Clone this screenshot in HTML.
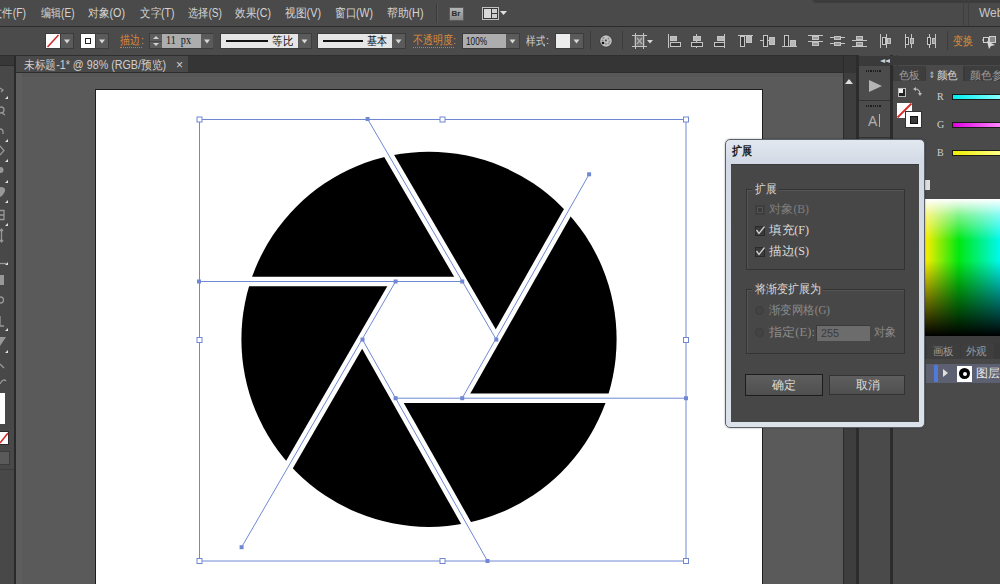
<!DOCTYPE html>
<html><head><meta charset="utf-8">
<style>
*{margin:0;padding:0;box-sizing:border-box}
html,body{width:1000px;height:584px;overflow:hidden;background:#4a4a4a;font-family:"Liberation Sans",sans-serif;position:relative}
.a{position:absolute}
.t{position:absolute;white-space:nowrap;line-height:1;transform-origin:0 0}
svg{position:absolute;left:0;top:0;overflow:visible}
</style></head><body>
<div class="a" style="left:0px;top:0px;width:1000px;height:26px;background:#4a4a4a;"></div>
<div class="a" style="left:0px;top:26px;width:1000px;height:1px;background:#2c2c2c;"></div>
<div class="a" style="left:812px;top:-6px;width:200px;height:9px;background:#3c3c3c;border-radius:6px"></div>
<div class="t" id="t0" style="left:-8px;top:7px;font-size:12px;color:#d4d4d4;font-family:'Liberation Sans',sans-serif;transform:scaleX(0.8645);">文件(F)</div>
<div class="t" id="t1" style="left:40.5px;top:7px;font-size:12px;color:#d4d4d4;font-family:'Liberation Sans',sans-serif;transform:scaleX(0.8375);">编辑(E)</div>
<div class="t" id="t2" style="left:88px;top:7px;font-size:12px;color:#d4d4d4;font-family:'Liberation Sans',sans-serif;transform:scaleX(0.8953);">对象(O)</div>
<div class="t" id="t3" style="left:139.5px;top:7px;font-size:12px;color:#d4d4d4;font-family:'Liberation Sans',sans-serif;transform:scaleX(0.8772);">文字(T)</div>
<div class="t" id="t4" style="left:188px;top:7px;font-size:12px;color:#d4d4d4;font-family:'Liberation Sans',sans-serif;transform:scaleX(0.8500);">选择(S)</div>
<div class="t" id="t5" style="left:235px;top:7px;font-size:12px;color:#d4d4d4;font-family:'Liberation Sans',sans-serif;transform:scaleX(0.8851);">效果(C)</div>
<div class="t" id="t6" style="left:285px;top:7px;font-size:12px;color:#d4d4d4;font-family:'Liberation Sans',sans-serif;transform:scaleX(0.9000);">视图(V)</div>
<div class="t" id="t7" style="left:335px;top:7px;font-size:12px;color:#d4d4d4;font-family:'Liberation Sans',sans-serif;transform:scaleX(0.8770);">窗口(W)</div>
<div class="t" id="t8" style="left:387px;top:7px;font-size:12px;color:#d4d4d4;font-family:'Liberation Sans',sans-serif;transform:scaleX(0.8974);">帮助(H)</div>
<div class="a" style="left:436px;top:4px;width:1px;height:19px;background:#3a3a3a;"></div>
<div class="a" style="left:437px;top:4px;width:1px;height:19px;background:#555;"></div>
<div class="a" style="left:449px;top:7px;width:15px;height:14px;background:linear-gradient(#b4b4b4,#8c8c8c);border:1px solid #5c5c5c"></div>
<div class="t" id="t9" style="left:451.5px;top:10px;font-size:8px;color:#2a2a2a;font-family:'Liberation Sans',sans-serif;font-weight:bold">Br</div>
<div class="a" style="left:482px;top:7px;width:17px;height:13px;border:1px solid #c0c0c0;background:#3a3a3a"></div>
<div class="a" style="left:484px;top:9px;width:7px;height:9px;background:#dadada;"></div>
<div class="a" style="left:492px;top:9px;width:5px;height:4px;background:#cfcfcf;"></div>
<div class="a" style="left:492px;top:14px;width:5px;height:4px;background:#cfcfcf;"></div>
<svg width="1000" height="584"><polygon points="500,11 507,11 503.5,15" fill="#e0e0e0"/></svg>
<div class="a" style="left:963px;top:0px;width:1px;height:26px;background:#3f3f3f;"></div>
<div class="a" style="left:968px;top:0px;width:1px;height:26px;background:#3f3f3f;"></div>
<div class="t" id="t10" style="left:979px;top:7px;font-size:12px;color:#c8c8c8;font-family:'Liberation Sans',sans-serif;">Web</div>
<div class="a" style="left:0px;top:27px;width:1000px;height:28px;background:#4b4b4b;"></div>
<div class="a" style="left:0px;top:55px;width:1000px;height:1px;background:#2e2e2e;"></div>
<div class="a" style="left:45px;top:33px;width:29px;height:16px;background:#3c3c3c;"></div>
<div class="a" style="left:46px;top:34px;width:14px;height:14px;background:#ffffff;"></div>
<svg width="1000" height="584"><line x1="47.5" y1="47" x2="58.5" y2="35" stroke="#d42a2a" stroke-width="1.6"/></svg>
<div class="a" style="left:61px;top:34px;width:12px;height:14px;background:#5a5a5a;"></div>
<div class="a" style="left:80px;top:33px;width:29px;height:16px;background:#3c3c3c;"></div>
<div class="a" style="left:81px;top:34px;width:14px;height:14px;background:#ffffff;"></div>
<div class="a" style="left:85px;top:38px;width:6px;height:6px;border:1px solid #222"></div>
<div class="a" style="left:96px;top:34px;width:12px;height:14px;background:#5a5a5a;"></div>
<svg width="1000" height="584"><polygon points="64.0,39.5 70.0,39.5 67,43.5" fill="#d6d6d6"/></svg>
<svg width="1000" height="584"><polygon points="99.0,39.5 105.0,39.5 102,43.5" fill="#d6d6d6"/></svg>
<div class="t" id="t11" style="left:120px;top:35px;font-size:11.5px;color:#dc8a3a;font-family:'Liberation Sans',sans-serif;transform:scaleX(0.8333);">描边</div>
<div class="t" id="t12" style="left:141px;top:35px;font-size:11px;color:#dc8a3a;font-family:'Liberation Sans',sans-serif;">:</div>
<div class="a" style="left:120px;top:47px;width:22px;height:0;border-top:1px dotted #c87a30"></div>
<div class="a" style="left:149px;top:33px;width:64px;height:16px;background:#3c3c3c;"></div>
<div class="a" style="left:150px;top:34px;width:12px;height:14px;background:#5d5d5d;"></div>
<div class="a" style="left:150px;top:40.5px;width:12px;height:1px;background:#444;"></div>
<svg width="1000" height="584"><polygon points="153,39 159,39 156,36" fill="#cfcfcf"/><polygon points="153,43 159,43 156,46" fill="#cfcfcf"/></svg>
<div class="a" style="left:162px;top:34px;width:39px;height:14px;background:#adadad;"></div>
<div class="t" id="t13" style="left:166px;top:35px;font-size:11.5px;color:#151515;font-family:'Liberation Serif',serif;transform:scaleX(0.8825);">11&nbsp;&nbsp;px</div>
<div class="a" style="left:201px;top:34px;width:12px;height:14px;background:#5a5a5a;"></div>
<svg width="1000" height="584"><polygon points="204.0,39.5 210.0,39.5 207,43.5" fill="#d6d6d6"/></svg>
<div class="a" style="left:220px;top:33px;width:92px;height:16px;background:#3c3c3c;"></div>
<div class="a" style="left:221px;top:34px;width:77px;height:14px;background:#e6e6e6;"></div>
<div class="a" style="left:226px;top:39.5px;width:42px;height:2px;background:#111;"></div>
<div class="t" id="t14" style="left:272px;top:35px;font-size:12px;color:#111;font-family:'Liberation Sans',sans-serif;transform:scaleX(0.8750);">等比</div>
<div class="a" style="left:298px;top:34px;width:13px;height:14px;background:#5a5a5a;"></div>
<svg width="1000" height="584"><polygon points="301.5,39.5 307.5,39.5 304.5,43.5" fill="#d6d6d6"/></svg>
<div class="a" style="left:317px;top:33px;width:89px;height:16px;background:#3c3c3c;"></div>
<div class="a" style="left:318px;top:34px;width:74px;height:14px;background:#e6e6e6;"></div>
<div class="a" style="left:323px;top:39.5px;width:40px;height:2px;background:#111;"></div>
<div class="t" id="t15" style="left:367px;top:35px;font-size:12px;color:#111;font-family:'Liberation Sans',sans-serif;transform:scaleX(0.8333);">基本</div>
<div class="a" style="left:392px;top:34px;width:13px;height:14px;background:#5a5a5a;"></div>
<svg width="1000" height="584"><polygon points="395.5,39.5 401.5,39.5 398.5,43.5" fill="#d6d6d6"/></svg>
<div class="t" id="t16" style="left:413px;top:35px;font-size:11.5px;color:#dc8a3a;font-family:'Liberation Sans',sans-serif;transform:scaleX(0.8333);">不透明度</div>
<div class="t" id="t17" style="left:453px;top:35px;font-size:11px;color:#dc8a3a;font-family:'Liberation Sans',sans-serif;">:</div>
<div class="a" style="left:413px;top:47px;width:41px;height:0;border-top:1px dotted #c87a30"></div>
<div class="a" style="left:462px;top:33px;width:58px;height:16px;background:#3c3c3c;"></div>
<div class="a" style="left:463px;top:34px;width:43px;height:14px;background:#adadad;"></div>
<div class="t" id="t18" style="left:466px;top:36px;font-size:10.5px;color:#151515;font-family:'Liberation Sans',sans-serif;transform:scaleX(0.7818);">100%</div>
<div class="a" style="left:506px;top:34px;width:13px;height:14px;background:#5a5a5a;"></div>
<svg width="1000" height="584"><polygon points="509.5,39.5 515.5,39.5 512.5,43.5" fill="#d6d6d6"/></svg>
<div class="t" id="t19" style="left:526px;top:35px;font-size:12px;color:#d0d0d0;font-family:'Liberation Sans',sans-serif;transform:scaleX(0.7917);">样式</div>
<div class="t" id="t20" style="left:546px;top:35px;font-size:11px;color:#d0d0d0;font-family:'Liberation Sans',sans-serif;">:</div>
<div class="a" style="left:555px;top:33px;width:29px;height:16px;background:#3c3c3c;"></div>
<div class="a" style="left:556px;top:34px;width:14px;height:14px;background:#ececec;"></div>
<div class="a" style="left:570px;top:34px;width:13px;height:14px;background:#5a5a5a;"></div>
<svg width="1000" height="584"><polygon points="573.5,39.5 579.5,39.5 576.5,43.5" fill="#d6d6d6"/></svg>
<div class="a" style="left:590px;top:31px;width:1px;height:19px;background:#3c3c3c;"></div>
<svg width="1000" height="584"><circle cx="606" cy="41" r="6.5" fill="#3c3c3c"/><circle cx="606" cy="41" r="5.8" fill="#c2c2c2"/><g fill="#8a8a8a"><circle cx="603.5" cy="38" r="1"/><circle cx="608.5" cy="38.5" r="1"/><circle cx="606" cy="40.5" r="1.1"/><circle cx="602.5" cy="40.5" r="1"/><circle cx="609.5" cy="41.5" r="1"/><circle cx="606" cy="44" r="1"/><circle cx="608.5" cy="43.5" r="0.9"/></g><circle cx="603" cy="43" r="1.3" fill="#111"/><circle cx="605.8" cy="40.4" r="0.9" fill="#444"/></svg>
<div class="a" style="left:622px;top:31px;width:1px;height:19px;background:#3c3c3c;"></div>
<svg width="1000" height="584"><rect x="634" y="35" width="11" height="12" fill="#6a6a6a"/><line x1="632" y1="35.5" x2="647" y2="35.5" stroke="#c4c4c4"/><line x1="632" y1="46.5" x2="647" y2="46.5" stroke="#c4c4c4"/><line x1="635.5" y1="33" x2="635.5" y2="49" stroke="#c4c4c4"/><line x1="643.5" y1="33" x2="643.5" y2="49" stroke="#c4c4c4"/><path d="M637,38 L642,44 M642,38 L637,44" stroke="#aaa" stroke-width="1.5"/><polygon points="647,40 653,40 650,43.5" fill="#d6d6d6"/></svg>
<svg width="1000" height="584"><line x1="668.5" y1="34" x2="668.5" y2="48" stroke="#c4c4c4"/><rect x="670.5" y="36.5" width="6" height="4" fill="#b8b8b8" stroke="#c4c4c4"/><rect x="670.5" y="42.5" width="10" height="4" fill="#3a3a3a" stroke="#c4c4c4"/></svg>
<svg width="1000" height="584"><line x1="696.5" y1="34" x2="696.5" y2="48" stroke="#c4c4c4"/><rect x="693.5" y="36.5" width="7" height="4" fill="#b8b8b8" stroke="#c4c4c4"/><rect x="691.5" y="42.5" width="11" height="4" fill="#3a3a3a" stroke="#c4c4c4"/></svg>
<svg width="1000" height="584"><line x1="724.5" y1="34" x2="724.5" y2="48" stroke="#c4c4c4"/><rect x="717.5" y="36.5" width="7" height="4" fill="#b8b8b8" stroke="#c4c4c4"/><rect x="714.5" y="42.5" width="10" height="4" fill="#3a3a3a" stroke="#c4c4c4"/></svg>
<svg width="1000" height="584"><line x1="738" y1="35.5" x2="753" y2="35.5" stroke="#c4c4c4"/><rect x="740.5" y="36.5" width="4" height="10" fill="#3a3a3a" stroke="#c4c4c4"/><rect x="746.5" y="36.5" width="5" height="6" fill="#b8b8b8" stroke="#c4c4c4"/></svg>
<svg width="1000" height="584"><line x1="760" y1="40.5" x2="775" y2="40.5" stroke="#c4c4c4"/><rect x="763.5" y="35.5" width="4" height="11" fill="#3a3a3a" stroke="#c4c4c4"/><rect x="769.5" y="37.5" width="5" height="7" fill="#b8b8b8" stroke="#c4c4c4"/></svg>
<svg width="1000" height="584"><line x1="782" y1="46.5" x2="797" y2="46.5" stroke="#c4c4c4"/><rect x="784.5" y="35.5" width="4" height="11" fill="#3a3a3a" stroke="#c4c4c4"/><rect x="790.5" y="40.5" width="5" height="6" fill="#b8b8b8" stroke="#c4c4c4"/></svg>
<svg width="1000" height="584"><line x1="808" y1="35.5" x2="823" y2="35.5" stroke="#c4c4c4"/><line x1="808" y1="41.5" x2="823" y2="41.5" stroke="#c4c4c4"/><rect x="812.5" y="36.5" width="6" height="3" fill="#9a9a9a" stroke="#c4c4c4"/><rect x="812.5" y="42.5" width="6" height="3" fill="#9a9a9a" stroke="#c4c4c4"/></svg>
<svg width="1000" height="584"><line x1="830" y1="37.5" x2="845" y2="37.5" stroke="#c4c4c4"/><line x1="830" y1="43.5" x2="845" y2="43.5" stroke="#c4c4c4"/><rect x="834.5" y="36.5" width="6" height="3" fill="#9a9a9a" stroke="#c4c4c4"/><rect x="834.5" y="42.5" width="6" height="3" fill="#9a9a9a" stroke="#c4c4c4"/></svg>
<svg width="1000" height="584"><line x1="852" y1="40.5" x2="867" y2="40.5" stroke="#c4c4c4"/><line x1="852" y1="46.5" x2="867" y2="46.5" stroke="#c4c4c4"/><rect x="856.5" y="36.5" width="6" height="3" fill="#9a9a9a" stroke="#c4c4c4"/><rect x="856.5" y="42.5" width="6" height="3" fill="#9a9a9a" stroke="#c4c4c4"/></svg>
<svg width="1000" height="584"><line x1="880.5" y1="34" x2="880.5" y2="48" stroke="#c4c4c4"/><line x1="886.5" y1="34" x2="886.5" y2="48" stroke="#c4c4c4"/><rect x="882.5" y="37.5" width="3" height="7" fill="#3a3a3a" stroke="#c4c4c4"/><rect x="887.5" y="38.5" width="3" height="5" fill="#9a9a9a" stroke="#c4c4c4"/></svg>
<svg width="1000" height="584"><line x1="905.5" y1="34" x2="905.5" y2="48" stroke="#c4c4c4"/><line x1="911.5" y1="34" x2="911.5" y2="48" stroke="#c4c4c4"/><rect x="905.5" y="37.5" width="3" height="7" fill="#3a3a3a" stroke="#c4c4c4"/><rect x="910.5" y="38.5" width="3" height="5" fill="#9a9a9a" stroke="#c4c4c4"/></svg>
<svg width="1000" height="584"><line x1="929.5" y1="34" x2="929.5" y2="48" stroke="#c4c4c4"/><line x1="935.5" y1="34" x2="935.5" y2="48" stroke="#c4c4c4"/><rect x="927.5" y="37.5" width="3" height="7" fill="#3a3a3a" stroke="#c4c4c4"/><rect x="932.5" y="38.5" width="3" height="5" fill="#9a9a9a" stroke="#c4c4c4"/></svg>
<div class="a" style="left:947px;top:31px;width:1px;height:19px;background:#3c3c3c;"></div>
<div class="t" id="t21" style="left:953px;top:35px;font-size:12px;color:#dc8a3a;font-family:'Liberation Sans',sans-serif;transform:scaleX(0.8333);">变换</div>
<svg width="1000" height="584"><rect x="983.5" y="37.5" width="5" height="5" fill="none" stroke="#cfcfcf"/><rect x="989.5" y="36.5" width="6" height="6" fill="#888" stroke="#cfcfcf"/><polygon points="987,41 995,45 991,46 989,49" fill="#d8d8d8"/><line x1="982" y1="40" x2="984" y2="40" stroke="#cfcfcf"/></svg>
<div class="a" style="left:0px;top:56px;width:856px;height:17px;background:#353535;"></div>
<div class="a" style="left:16px;top:56px;width:172px;height:16px;background:#494949;"></div>
<div class="a" style="left:16px;top:72px;width:827px;height:1px;background:#2c2c2c;"></div>
<div class="t" id="t22" style="left:24px;top:59px;font-size:12px;color:#cfcfcf;font-family:'Liberation Sans',sans-serif;transform:scaleX(0.8938);">未标题-1* @ 98% (RGB/预览)</div>
<div class="t" id="t23" style="left:176px;top:59px;font-size:12px;color:#cfcfcf;font-family:'Liberation Sans',sans-serif;transform:scaleX(0.9978);">×</div>
<div class="a" style="left:0px;top:56px;width:14px;height:528px;background:#484848;"></div>
<div class="a" style="left:0px;top:56px;width:14px;height:9px;background:#383838;"></div>
<div class="a" style="left:14px;top:56px;width:2px;height:528px;background:#2a2a2a;"></div>
<div class="a" style="left:16px;top:73px;width:827px;height:511px;background:#5a5a5a;"></div>
<div class="a" style="left:16px;top:73px;width:827px;height:4px;background:#575757;"></div>
<div class="a" style="left:16px;top:73px;width:6px;height:511px;background:#5d5d5d;"></div>
<div class="a" style="left:95px;top:89px;width:668px;height:500px;background:#ffffff;border:1px solid #1e1e1e"></div>
<svg width="1000" height="584"><circle cx="429" cy="339.3" r="187.6" fill="#000"/>
<polygon points="395.6,281.5 462.2,281.5 496.3,339.6 462.2,398.2 395.6,398.2 362.5,339.6" fill="#fff"/>
<line x1="199.0" y1="281.5" x2="462.2" y2="281.5" stroke="#fff" stroke-width="9.5"/>
<line x1="367.6" y1="119.0" x2="496.3" y2="339.6" stroke="#fff" stroke-width="9.5"/>
<line x1="589.1" y1="174.3" x2="462.2" y2="398.2" stroke="#fff" stroke-width="9.5"/>
<line x1="395.6" y1="398.2" x2="686.0" y2="398.2" stroke="#fff" stroke-width="9.5"/>
<line x1="487.5" y1="561.0" x2="362.5" y2="339.6" stroke="#fff" stroke-width="9.5"/>
<line x1="241.6" y1="547.2" x2="395.6" y2="281.5" stroke="#fff" stroke-width="9.5"/>
<rect x="199.5" y="119.5" width="486.5" height="441.5" fill="none" stroke="#7088d4" stroke-width="1"/>
<line x1="199.0" y1="281.5" x2="462.2" y2="281.5" stroke="#7088d4" stroke-width="1"/>
<line x1="367.6" y1="119.0" x2="496.3" y2="339.6" stroke="#7088d4" stroke-width="1"/>
<line x1="589.1" y1="174.3" x2="462.2" y2="398.2" stroke="#7088d4" stroke-width="1"/>
<line x1="395.6" y1="398.2" x2="686.0" y2="398.2" stroke="#7088d4" stroke-width="1"/>
<line x1="487.5" y1="561.0" x2="362.5" y2="339.6" stroke="#7088d4" stroke-width="1"/>
<line x1="241.6" y1="547.2" x2="395.6" y2="281.5" stroke="#7088d4" stroke-width="1"/>
<rect x="197.0" y="279.5" width="4" height="4" fill="#7088d4"/>
<rect x="460.2" y="279.5" width="4" height="4" fill="#7088d4"/>
<rect x="365.6" y="117.0" width="4" height="4" fill="#7088d4"/>
<rect x="494.3" y="337.6" width="4" height="4" fill="#7088d4"/>
<rect x="587.1" y="172.3" width="4" height="4" fill="#7088d4"/>
<rect x="460.2" y="396.2" width="4" height="4" fill="#7088d4"/>
<rect x="393.6" y="396.2" width="4" height="4" fill="#7088d4"/>
<rect x="684.0" y="396.2" width="4" height="4" fill="#7088d4"/>
<rect x="485.5" y="559.0" width="4" height="4" fill="#7088d4"/>
<rect x="360.5" y="337.6" width="4" height="4" fill="#7088d4"/>
<rect x="239.6" y="545.2" width="4" height="4" fill="#7088d4"/>
<rect x="393.6" y="279.5" width="4" height="4" fill="#7088d4"/>
<rect x="197.0" y="117.0" width="5" height="5" fill="#fff" stroke="#7088d4" stroke-width="1"/>
<rect x="440.0" y="117.0" width="5" height="5" fill="#fff" stroke="#7088d4" stroke-width="1"/>
<rect x="683.5" y="117.0" width="5" height="5" fill="#fff" stroke="#7088d4" stroke-width="1"/>
<rect x="197.0" y="337.5" width="5" height="5" fill="#fff" stroke="#7088d4" stroke-width="1"/>
<rect x="683.5" y="337.5" width="5" height="5" fill="#fff" stroke="#7088d4" stroke-width="1"/>
<rect x="197.0" y="558.5" width="5" height="5" fill="#fff" stroke="#7088d4" stroke-width="1"/>
<rect x="440.0" y="558.5" width="5" height="5" fill="#fff" stroke="#7088d4" stroke-width="1"/>
<rect x="683.5" y="558.5" width="5" height="5" fill="#fff" stroke="#7088d4" stroke-width="1"/></svg>
<div class="a" style="left:843px;top:55px;width:1px;height:529px;background:#2b2b2b;"></div>
<div class="a" style="left:844px;top:73px;width:12px;height:511px;background:#3e3e3e;"></div>
<svg width="1000" height="584"><polygon points="845,84 853,84 849,79" fill="#dddddd"/></svg>
<div class="a" style="left:856px;top:55px;width:3px;height:529px;background:#2c2c2c;"></div>
<div class="a" style="left:859px;top:55px;width:31px;height:529px;background:#4a4a4a;"></div>
<div class="a" style="left:859px;top:56px;width:31px;height:10px;background:#3a3a3a;"></div>
<div class="a" style="left:890px;top:55px;width:3px;height:529px;background:#2c2c2c;"></div>
<div class="a" style="left:893px;top:55px;width:4px;height:529px;background:#474747;"></div>
<div class="a" style="left:897px;top:55px;width:1px;height:529px;background:#333;"></div>
<div class="a" style="left:898px;top:55px;width:102px;height:529px;background:#4a4a4a;"></div>
<div class="a" style="left:859px;top:56px;width:141px;height:9px;background:#3a3a3a;"></div>
<div class="t" id="t24" style="left:880px;top:57px;font-size:8px;color:#cfcfcf;font-family:'Liberation Sans',sans-serif;transform:scaleX(1.2500);">◂◂</div>
<div class="a" style="left:859px;top:66px;width:31px;height:34px;background:#4c4c4c;"></div>
<div class="a" style="left:859px;top:100px;width:31px;height:1px;background:#333;"></div>
<div class="a" style="left:859px;top:101px;width:31px;height:36px;background:#4c4c4c;"></div>
<div class="a" style="left:859px;top:137px;width:31px;height:1px;background:#333;"></div>
<div class="a" style="left:866.0px;top:70px;width:1px;height:2px;background:#1e1e1e;"></div>
<div class="a" style="left:867.8px;top:70px;width:1px;height:2px;background:#1e1e1e;"></div>
<div class="a" style="left:869.6px;top:70px;width:1px;height:2px;background:#1e1e1e;"></div>
<div class="a" style="left:871.4px;top:70px;width:1px;height:2px;background:#1e1e1e;"></div>
<div class="a" style="left:873.2px;top:70px;width:1px;height:2px;background:#1e1e1e;"></div>
<div class="a" style="left:875.0px;top:70px;width:1px;height:2px;background:#1e1e1e;"></div>
<div class="a" style="left:876.8px;top:70px;width:1px;height:2px;background:#1e1e1e;"></div>
<div class="a" style="left:878.6px;top:70px;width:1px;height:2px;background:#1e1e1e;"></div>
<div class="a" style="left:880.4px;top:70px;width:1px;height:2px;background:#1e1e1e;"></div>
<div class="a" style="left:866.0px;top:105px;width:1px;height:2px;background:#1e1e1e;"></div>
<div class="a" style="left:867.8px;top:105px;width:1px;height:2px;background:#1e1e1e;"></div>
<div class="a" style="left:869.6px;top:105px;width:1px;height:2px;background:#1e1e1e;"></div>
<div class="a" style="left:871.4px;top:105px;width:1px;height:2px;background:#1e1e1e;"></div>
<div class="a" style="left:873.2px;top:105px;width:1px;height:2px;background:#1e1e1e;"></div>
<div class="a" style="left:875.0px;top:105px;width:1px;height:2px;background:#1e1e1e;"></div>
<div class="a" style="left:876.8px;top:105px;width:1px;height:2px;background:#1e1e1e;"></div>
<div class="a" style="left:878.6px;top:105px;width:1px;height:2px;background:#1e1e1e;"></div>
<div class="a" style="left:880.4px;top:105px;width:1px;height:2px;background:#1e1e1e;"></div>
<svg width="1000" height="584"><polygon points="869,80 869,92 882,86" fill="#b4b4b4"/></svg>
<div class="t" id="t25" style="left:868px;top:114px;font-size:14px;color:#b0b0b0;font-family:'Liberation Sans',sans-serif;">A</div>
<div class="a" style="left:879px;top:114px;width:1px;height:13px;background:#b0b0b0;"></div>
<div class="a" style="left:893px;top:66px;width:107px;height:15px;background:#3a3a3a;"></div>
<div class="a" style="left:894px;top:66px;width:31px;height:15px;background:#3e3e3e;"></div>
<div class="a" style="left:926px;top:66px;width:37px;height:15px;background:#4a4a4a;"></div>
<div class="a" style="left:965px;top:66px;width:35px;height:15px;background:#3e3e3e;"></div>
<div class="t" id="t26" style="left:899px;top:69.5px;font-size:11px;color:#9a9a9a;font-family:'Liberation Sans',sans-serif;transform:scaleX(0.9545);">色板</div>
<div class="t" id="t27" style="left:929px;top:70.5px;font-size:9px;color:#cfcfcf;font-family:'Liberation Sans',sans-serif;transform:scaleX(0.7500);">⇕</div>
<div class="t" id="t28" style="left:937px;top:69.5px;font-size:11px;color:#d8d8d8;font-family:'Liberation Sans',sans-serif;transform:scaleX(0.9545);">颜色</div>
<div class="t" id="t29" style="left:970px;top:69.5px;font-size:11px;color:#9a9a9a;font-family:'Liberation Sans',sans-serif;">颜色参</div>
<div class="a" style="left:893px;top:81px;width:107px;height:255px;background:#4a4a4a;"></div>
<div class="a" style="left:898px;top:88px;width:8px;height:9px;border:1px solid #bbb;background:#222"></div>
<div class="a" style="left:899px;top:89px;width:4px;height:4px;background:#eee;"></div>
<svg width="1000" height="584"><path d="M915,89 q5,0 5,5" fill="none" stroke="#bbb" stroke-width="1.2"/><polygon points="913,89 916,87 916,91" fill="#bbb"/><polygon points="920,96 918,93 922,93" fill="#bbb"/></svg>
<div class="a" style="left:897px;top:103px;width:15px;height:15px;background:#ffffff;"></div>
<svg width="1000" height="584"><line x1="897.5" y1="117.5" x2="911.5" y2="103.5" stroke="#d42a2a" stroke-width="1.8"/></svg>
<div class="a" style="left:905px;top:111px;width:17px;height:17px;background:#fff;border:1px solid #333"></div>
<div class="a" style="left:910px;top:116px;width:8px;height:8px;border:1px solid #111;background:#3a3a3a"></div>
<div class="t" id="t30" style="left:937px;top:92px;font-size:10px;color:#d0d0d0;font-family:'Liberation Serif',serif;">R</div>
<div class="t" id="t31" style="left:937px;top:120px;font-size:10px;color:#d0d0d0;font-family:'Liberation Serif',serif;">G</div>
<div class="t" id="t32" style="left:937px;top:148px;font-size:10px;color:#d0d0d0;font-family:'Liberation Serif',serif;">B</div>
<div class="a" style="left:952px;top:94px;width:48px;height:6px;background:#1a1a1a;"></div>
<div class="a" style="left:953px;top:95px;width:47px;height:4px;background:linear-gradient(90deg,#00eeee,#88ffff)"></div>
<div class="a" style="left:952px;top:122px;width:48px;height:6px;background:#1a1a1a;"></div>
<div class="a" style="left:953px;top:123px;width:47px;height:4px;background:linear-gradient(90deg,#e000e0,#ff88ff)"></div>
<div class="a" style="left:952px;top:150px;width:48px;height:6px;background:#1a1a1a;"></div>
<div class="a" style="left:953px;top:151px;width:47px;height:4px;background:linear-gradient(90deg,#eeee00,#ffff88)"></div>
<div class="a" style="left:924px;top:180px;width:6px;height:10px;background:#dedede;"></div>
<div class="a" style="left:925px;top:199px;width:75px;height:137px;background:linear-gradient(to bottom,rgba(255,255,255,1) 0%,rgba(255,255,255,.5) 12%,rgba(255,255,255,0) 30%,rgba(0,0,0,0) 45%,rgba(0,0,0,.5) 72%,rgba(0,0,0,1) 100%),linear-gradient(90deg,#ffee00 0%,#00e810 45%,#00f8f0 100%)"></div>
<div class="a" style="left:893px;top:336px;width:107px;height:7px;background:#3d3d3d;"></div>
<div class="a" style="left:893px;top:343px;width:107px;height:16px;background:#3a3a3a;"></div>
<div class="a" style="left:927px;top:343px;width:33px;height:16px;background:#3e3e3e;"></div>
<div class="a" style="left:961px;top:343px;width:33px;height:16px;background:#3e3e3e;"></div>
<div class="t" id="t33" style="left:933px;top:346px;font-size:11px;color:#9a9a9a;font-family:'Liberation Sans',sans-serif;transform:scaleX(0.9545);">画板</div>
<div class="t" id="t34" style="left:966px;top:346px;font-size:11px;color:#9a9a9a;font-family:'Liberation Sans',sans-serif;transform:scaleX(0.9545);">外观</div>
<div class="a" style="left:893px;top:359px;width:107px;height:5px;background:#484848;"></div>
<div class="a" style="left:926px;top:364px;width:74px;height:19px;background:#5c6070;"></div>
<div class="a" style="left:934px;top:365px;width:4px;height:17px;background:#4f7ad8;"></div>
<svg width="1000" height="584"><polygon points="943,369 943,377 948,373" fill="#e0e0e0"/></svg>
<div class="a" style="left:957px;top:366px;width:15px;height:16px;background:#ffffff;"></div>
<div class="a" style="left:959px;top:368px;width:11px;height:11px;border-radius:50%;background:#000"></div>
<div class="a" style="left:962.5px;top:371.5px;width:4px;height:4px;border-radius:50%;background:#fff"></div>
<div class="t" id="t35" style="left:976px;top:367px;font-size:12px;color:#e8e8e8;font-family:'Liberation Sans',sans-serif;transform:scaleX(1.0000);">图层</div>
<div class="a" style="left:893px;top:383px;width:107px;height:201px;background:#4a4a4a;"></div>
<div class="a" style="left:0px;top:65px;width:14px;height:1px;background:#2c2c2c;"></div>
<svg width="1000" height="584"><polygon points="5,99 8,99 8,96" fill="#e0e0e0"/></svg>
<svg width="1000" height="584"><polygon points="5,142 8,142 8,139" fill="#e0e0e0"/></svg>
<svg width="1000" height="584"><polygon points="5,162 8,162 8,159" fill="#e0e0e0"/></svg>
<svg width="1000" height="584"><polygon points="5,183 8,183 8,180" fill="#e0e0e0"/></svg>
<svg width="1000" height="584"><polygon points="5,203 8,203 8,200" fill="#e0e0e0"/></svg>
<svg width="1000" height="584"><polygon points="5,226 8,226 8,223" fill="#e0e0e0"/></svg>
<svg width="1000" height="584"><polygon points="5,265 8,265 8,262" fill="#e0e0e0"/></svg>
<svg width="1000" height="584"><polygon points="5,331 8,331 8,328" fill="#e0e0e0"/></svg>
<svg width="1000" height="584"><polygon points="5,353 8,353 8,350" fill="#e0e0e0"/></svg>
<svg width="1000" height="584" style="opacity:.85"><g fill="none" stroke="#a6a6a6" stroke-width="1.3">
<path d="M0,88 L3,90 L1,92"/>
<circle cx="1" cy="110" r="3"/><path d="M2,113 L5,115"/>
<path d="M0,129 q3,0 3,3 v2"/>
<path d="M0,146 L4,150.5 L0,155"/>
<path d="M0,210.5 h4 v9 h-4 M0,215 h4"/>
<path d="M1.5,229 v13 M0,231 l1.5,-2 l1.5,2 M0,240 l1.5,2 l1.5,-2"/>
<path d="M0,263.5 h6"/>
<circle cx="0.5" cy="300" r="3"/>
<path d="M0,316 v10 h4"/>
<path d="M0,364 l4,4"/>
<path d="M0,384 q3,-6 6,-3"/>
</g><g fill="#a6a6a6">
<circle cx="0.5" cy="170" r="3"/>
<path d="M0,187 q6,0 5,4 q-2,5 -5,6 z"/>
<rect x="0" y="275" width="4" height="10"/>
<path d="M0,337 h6 l-6,9 z"/>
</g></svg>
<div class="a" style="left:0px;top:393px;width:5px;height:31px;background:#ffffff;"></div>
<div class="a" style="left:0px;top:431px;width:9px;height:14px;background:#2a2a2a;"></div>
<div class="a" style="left:0px;top:432px;width:8px;height:12px;background:#ffffff;"></div>
<svg width="1000" height="584"><line x1="0" y1="443" x2="8" y2="433" stroke="#d42a2a" stroke-width="1.6"/></svg>
<div class="a" style="left:0px;top:451px;width:10px;height:14px;background:#3c3c3c;"></div>
<div class="a" style="left:0px;top:452px;width:9px;height:12px;background:#5a5a5a;"></div>
<div class="a" style="left:0px;top:469px;width:14px;height:1px;background:#3c3c3c;"></div>
<div class="a" style="left:725px;top:139px;width:200px;height:289px;border-radius:5px;background:linear-gradient(180deg,#e2e8f0 0%,#d3dae5 8%,#dce2ea 100%);border:1px solid #5b616a;box-shadow:0 0 2px rgba(0,0,0,.4)"></div>
<div class="t" id="t36" style="left:732px;top:146px;font-size:11.5px;color:#1a1a1a;font-family:'Liberation Sans',sans-serif;transform:scaleX(0.8333);font-weight:bold">扩展</div>
<div class="a" style="left:731px;top:164px;width:188px;height:258px;background:#474747;"></div>
<div class="a" style="left:731px;top:164px;width:188px;height:1px;background:#3a3a3a;"></div>
<div class="a" style="left:746px;top:189px;width:159px;height:81px;border:1px solid #333;box-shadow:inset 1px 1px 0 #555"></div>
<div class="a" style="left:752px;top:183px;width:26px;height:12px;background:#474747;"></div>
<div class="t" id="t37" style="left:754.5px;top:183px;font-size:12px;color:#d8d8d8;font-family:'Liberation Sans',sans-serif;transform:scaleX(0.8958);">扩展</div>
<div class="a" style="left:755px;top:204.5px;width:10px;height:10px;background:#3a3a3a;border:1px solid #404040"></div>
<div class="a" style="left:757px;top:206.5px;width:6px;height:6px;border:1px solid #555"></div>
<div class="a" style="left:755px;top:225.5px;width:10px;height:10px;background:#3a3a3a;border:1px solid #2a2a2a"></div>
<svg width="1000" height="584"><polyline points="756.5,230.0 759,233.5 764.5,226.5" fill="none" stroke="#d0d0d0" stroke-width="1.3"/></svg>
<div class="a" style="left:755px;top:246.5px;width:10px;height:10px;background:#3a3a3a;border:1px solid #2a2a2a"></div>
<svg width="1000" height="584"><polyline points="756.5,251.0 759,254.5 764.5,247.5" fill="none" stroke="#d0d0d0" stroke-width="1.3"/></svg>
<div class="t" id="t38" style="left:768.5px;top:204px;font-size:11.5px;color:#7e7e7e;font-family:'Liberation Serif',serif;transform:scaleX(1.0167);">对象(B)</div>
<div class="t" id="t39" style="left:768.5px;top:225px;font-size:11.5px;color:#dadada;font-family:'Liberation Serif',serif;transform:scaleX(1.0509);">填充(F)</div>
<div class="t" id="t40" style="left:768.5px;top:246px;font-size:11.5px;color:#dadada;font-family:'Liberation Serif',serif;transform:scaleX(1.0509);">描边(S)</div>
<div class="a" style="left:746px;top:289px;width:159px;height:65px;border:1px solid #333;box-shadow:inset 1px 1px 0 #555"></div>
<div class="a" style="left:752px;top:283px;width:71px;height:12px;background:#474747;"></div>
<div class="t" id="t41" style="left:754.5px;top:283px;font-size:12px;color:#d8d8d8;font-family:'Liberation Sans',sans-serif;transform:scaleX(0.9236);">将渐变扩展为</div>
<div class="a" style="left:754.5px;top:306px;width:9px;height:9px;border-radius:50%;background:#434343;border:1px solid #3c3c3c"></div>
<div class="a" style="left:754.5px;top:328px;width:9px;height:9px;border-radius:50%;background:#434343;border:1px solid #3c3c3c"></div>
<div class="t" id="t42" style="left:769px;top:305px;font-size:11.5px;color:#8a8a8a;font-family:'Liberation Serif',serif;transform:scaleX(0.9536);">渐变网格(G)</div>
<div class="t" id="t43" style="left:769px;top:327px;font-size:11.5px;color:#8a8a8a;font-family:'Liberation Serif',serif;transform:scaleX(1.0981);">指定(E):</div>
<div class="a" style="left:816px;top:325px;width:54px;height:16px;background:#3a3a3a;"></div>
<div class="a" style="left:817px;top:326px;width:53px;height:15px;background:#6c6c6c;"></div>
<div class="t" id="t44" style="left:821px;top:328px;font-size:11px;color:#3c3c3c;font-family:'Liberation Sans',sans-serif;transform:scaleX(0.9804);">255</div>
<div class="t" id="t45" style="left:874px;top:326px;font-size:12px;color:#8a8a8a;font-family:'Liberation Sans',sans-serif;transform:scaleX(0.9167);">对象</div>
<div class="a" style="left:745px;top:374px;width:78px;height:22px;border:1px solid #1c1c1c;background:linear-gradient(#5e5e5e,#4f4f4f)"></div>
<div class="a" style="left:829px;top:375px;width:76px;height:20px;border:1px solid #333;background:linear-gradient(#5e5e5e,#4f4f4f)"></div>
<div class="t" id="t46" style="left:772px;top:380px;font-size:11.5px;color:#dcdcdc;font-family:'Liberation Sans',sans-serif;transform:scaleX(1.0000);">确定</div>
<div class="t" id="t47" style="left:856px;top:380px;font-size:11.5px;color:#dcdcdc;font-family:'Liberation Sans',sans-serif;transform:scaleX(1.0000);">取消</div>
</body></html>
